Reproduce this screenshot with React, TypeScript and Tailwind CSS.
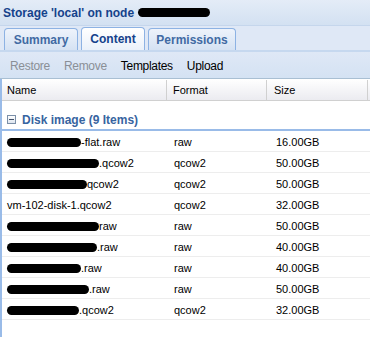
const rows: { name: string; blob: number; format: string; size: string }[] = [
  { name: '-flat.raw', blob: 74, format: 'raw', size: '16.00GB' },
  { name: '.qcow2', blob: 92, format: 'qcow2', size: '50.00GB' },
  { name: 'qcow2', blob: 80, format: 'qcow2', size: '50.00GB' },
  { name: 'vm-102-disk-1.qcow2', blob: 0, format: 'qcow2', size: '32.00GB' },
  { name: 'raw', blob: 92, format: 'raw', size: '50.00GB' },
  { name: '.raw', blob: 90, format: 'raw', size: '40.00GB' },
  { name: '.raw', blob: 74, format: 'raw', size: '40.00GB' },
  { name: '.raw', blob: 82, format: 'raw', size: '50.00GB' },
  { name: '.qcow2', blob: 72, format: 'qcow2', size: '32.00GB' },
];

export default function App() {
  return (
    <div className="w-[370px] h-[337px] overflow-hidden bg-white text-[11px] text-black" style={{ fontFamily: '"Liberation Sans", Arial, sans-serif' }}>
      {/* title */}
      <div className="h-[26px] flex items-center pl-[3px] bg-gradient-to-b from-[#e4ecf7] to-[#d3e1f2] border-b border-[#c5d6ec]">
        <span className="font-bold text-[12px] text-[#15428b]">Storage 'local' on node</span>
        <span className="ml-[4px] w-[72px] h-[9px] rounded-full bg-black" />
      </div>

      {/* tabs */}
      <div className="h-[26px] bg-[#dfe8f6] flex items-end pl-[4px] gap-[3px] border-b-[2px] border-[#c6d8ef]">
        <div className="w-[74px] h-[22px] flex items-center justify-center rounded-t-[4px] border border-b-0 border-[#8db2e3] bg-gradient-to-b from-[#eef3fb] to-[#d5e2f3] font-bold text-[12px] text-[#416aa3]">Summary</div>
        <div className="w-[64px] h-[23px] flex items-center justify-center rounded-t-[4px] border border-b-0 border-[#8db2e3] bg-gradient-to-b from-white to-[#eaf1fa] font-bold text-[12px] text-[#15428b]">Content</div>
        <div className="w-[88px] h-[22px] flex items-center justify-center rounded-t-[4px] border border-b-0 border-[#8db2e3] bg-gradient-to-b from-[#eef3fb] to-[#d5e2f3] font-bold text-[12px] text-[#416aa3]">Permissions</div>
      </div>

      {/* toolbar */}
      <div className="h-[27px] flex items-center gap-[14px] pl-[10px] pt-[2px] bg-gradient-to-b from-[#dfe8f6] to-[#d4e2f3] border-b border-[#a9bfd3] text-[12px]">
        <span className="text-[#8a8f96] tracking-[-0.3px]">Restore</span>
        <span className="text-[#8a8f96] tracking-[-0.3px]">Remove</span>
        <span className="text-black tracking-[-0.3px]">Templates</span>
        <span className="text-black tracking-[-0.3px]">Upload</span>
      </div>

      {/* body */}
      <div className="border-l-[2px] border-[#99bbe8] h-full">
        <div className="h-[22px] flex pt-[1px] bg-gradient-to-b from-white to-[#ebebf0] border-b border-[#d0d0d0] text-[11px]">
          <div className="w-[165px] pl-[5px] flex items-center border-r border-[#d0d0d0]">Name</div>
          <div className="w-[100px] pl-[6px] flex items-center border-r border-[#d0d0d0]">Format</div>
          <div className="w-[101px] pl-[7px] flex items-center border-r border-[#d0d0d0]">Size</div>
        </div>

        <div className="h-[30px] flex items-center pt-[9px] pl-[5px] gap-[6px] border-b-[2px] border-[#99bbe8]">
          <span className="w-[9px] h-[9px] border border-[#7b8fa8] bg-gradient-to-b from-white to-[#dde5ef] flex items-center justify-center">
            <span className="w-[5px] h-px bg-[#43526b]" />
          </span>
          <span className="font-bold text-[12px] text-[#3764a0]">Disk image (9 Items)</span>
        </div>

        {rows.map((r, i) => (
          <div key={i} className="h-[21px] flex items-center pt-[3px] border-b border-[#ededed]">
            <div className="w-[166px] pl-[5px] flex items-center">
              {r.blob > 0 && <span className="h-[9px] rounded-full bg-black" style={{ width: r.blob }} />}
              <span>{r.name}</span>
            </div>
            <div className="w-[101px] pl-[6px]">{r.format}</div>
            <div className="w-[101px] pl-[7px]">{r.size}</div>
          </div>
        ))}
      </div>
    </div>
  );
}
